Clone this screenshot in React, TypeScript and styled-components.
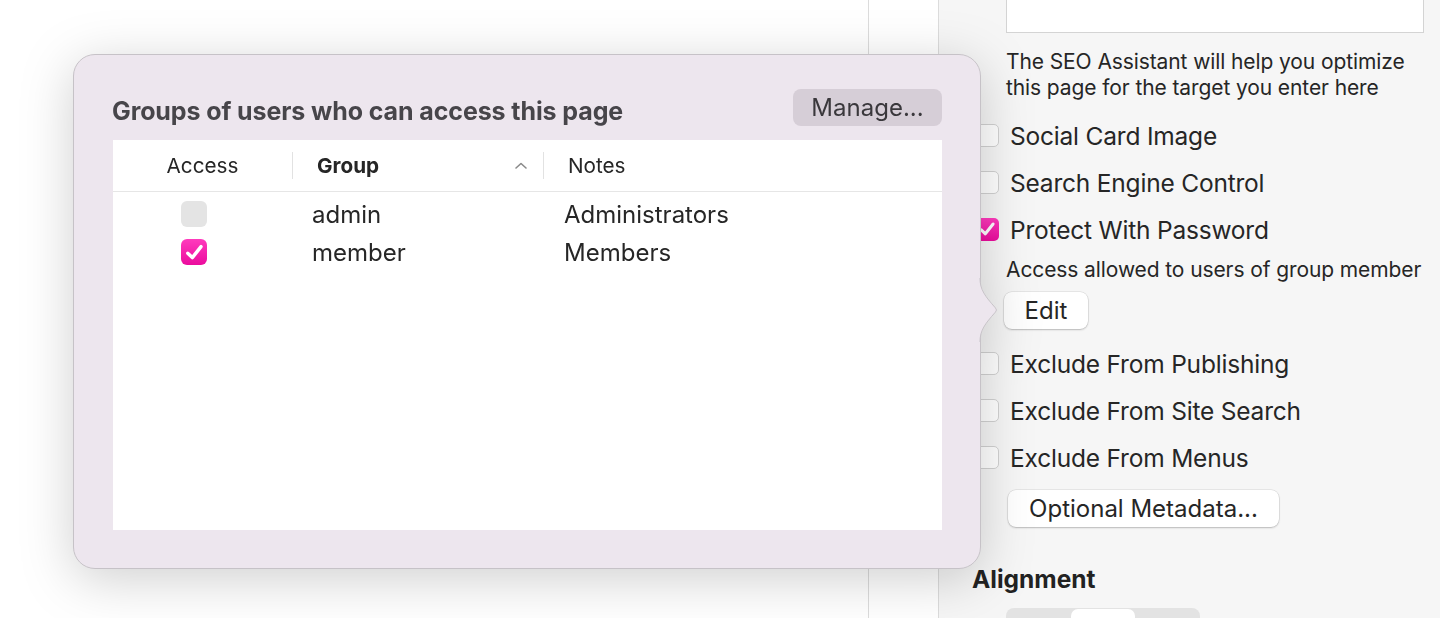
import React from "react";
import styled, { createGlobalStyle } from "styled-components";

const GlobalStyle = createGlobalStyle`
  html, body {
    margin: 0;
    padding: 0;
    background: #ffffff;
    font-family: Inter, "Noto Sans", "Liberation Sans", sans-serif;
    color: #252525;
    -webkit-font-smoothing: antialiased;
  }
`;

const Page = styled.div`
  position: relative;
  display: flex;
  width: 1440px;
  height: 618px;
  overflow: hidden;
`;

const Canvas = styled.div`
  width: 868px;
  background: #ffffff;
  border-right: 1px solid #dcdcdc;
`;

const Gutter = styled.div`
  width: 69px;
  background: #ffffff;
  border-right: 1px solid #dcdcdc;
`;

const Inspector = styled.div`
  flex: 1;
  background: #f6f6f6;
  display: flex;
  flex-direction: column;
  padding-left: 37px;
  padding-right: 16px;
  overflow: hidden;

  & > * {
    flex-shrink: 0;
  }
`;

const TargetField = styled.div`
  margin-left: 30px;
  height: 32px;
  background: #ffffff;
  border: 1px solid #d4d4d4;
  border-top: none;
`;

const HelpText = styled.p<{ $top: number }>`
  margin: ${(p) => p.$top}px 0 0 30px;
  font-size: 21px;
  line-height: 26px;
  color: #262626;
  letter-spacing: -0.1px;
  white-space: nowrap;
`;

const OptionList = styled.div<{ $top: number }>`
  display: flex;
  flex-direction: column;
  margin-top: ${(p) => p.$top}px;
`;

const OptionRow = styled.label`
  display: flex;
  align-items: center;
  gap: 11px;
  height: 47px;
  font-size: 24.5px;
  color: #262626;
  letter-spacing: -0.2px;
`;

const Box = styled.span<{ $checked?: boolean; $size: number }>`
  flex: none;
  width: ${(p) => p.$size}px;
  height: ${(p) => p.$size}px;
  border-radius: ${(p) => Math.round(p.$size / 4.5)}px;
  box-sizing: border-box;
  display: flex;
  align-items: center;
  justify-content: center;
  background: ${(p) =>
    p.$checked ? "linear-gradient(180deg, #ff3bbd 0%, #eb0c9d 100%)" : "#ffffff"};
  border: ${(p) => (p.$checked ? "none" : "1px solid #d2d2d2")};
`;

const GreyBox = styled(Box)`
  background: #e4e4e4;
  border: none;
`;

const PushButton = styled.button<{ $left: number; $width: number; $top: number }>`
  margin: ${(p) => p.$top}px 0 0 ${(p) => p.$left}px;
  width: ${(p) => p.$width}px;
  height: 37px;
  border: none;
  border-radius: 8px;
  background: #ffffff;
  box-shadow: 0 0 0 0.5px rgba(0, 0, 0, 0.12), 0 1px 2px rgba(0, 0, 0, 0.2);
  font-family: inherit;
  font-size: 24px;
  color: #262626;
  padding: 0;
`;

const SectionTitle = styled.h3`
  margin: 39px 0 0 -4px;
  font-size: 24.5px;
  font-weight: 700;
  line-height: 26px;
  color: #222;
`;

const Segmented = styled.div`
  margin: 16px 0 0 30px;
  width: 194px;
  height: 30px;
  border-radius: 8px;
  background: #e3e3e3;
  display: flex;
  padding-left: 65px;
  box-sizing: border-box;
`;

const SegmentOn = styled.div`
  width: 64px;
  height: 28px;
  margin-top: 1px;
  border-radius: 7px;
  background: #ffffff;
`;

/* popover */

const Popover = styled.div`
  position: absolute;
  left: 73px;
  top: 54px;
  width: 908px;
  height: 515px;
  filter: drop-shadow(0 10px 26px rgba(0, 0, 0, 0.19));
`;

const PopoverBody = styled.div`
  width: 100%;
  height: 100%;
  box-sizing: border-box;
  background: #ede6ee;
  border: 1px solid #c6c2c7;
  border-radius: 22px;
  padding: 34px 38px 38px 39px;
  display: flex;
  flex-direction: column;
`;

const Arrow = styled.svg`
  position: absolute;
  right: -18px;
  top: 224px;
`;

const PopoverHeader = styled.div`
  display: flex;
  align-items: center;
  justify-content: space-between;
  height: 37px;
  margin-bottom: 14px;
`;

const PopoverTitle = styled.h2`
  margin: 6px 0 0 -1px;
  font-size: 25px;
  font-weight: 700;
  color: #47454a;
  letter-spacing: -0.1px;
`;

const ManageButton = styled.button`
  width: 149px;
  height: 37px;
  border: none;
  border-radius: 8px;
  background: #d6ced7;
  font-family: inherit;
  font-size: 24px;
  color: #3a383c;
  padding: 0;
`;

const Table = styled.div`
  flex: 1;
  background: #ffffff;
  display: flex;
  flex-direction: column;
`;

const HeaderRow = styled.div`
  display: grid;
  grid-template-columns: 179px 251px 1fr;
  height: 51px;
  border-bottom: 1px solid #e6e6e6;
  margin-bottom: 3px;
`;

const HeadCell = styled.div<{ $bold?: boolean; $divider?: boolean }>`
  display: flex;
  align-items: center;
  padding: 0 15px 0 24px;
  font-size: 20.7px;
  font-weight: ${(p) => (p.$bold ? 700 : 400)};
  color: #262626;
  border-left: ${(p) => (p.$divider ? "1px solid #e2e2e2" : "none")};
  margin: ${(p) => (p.$divider ? "12px 0" : "0")};
  box-sizing: border-box;
`;

const AccessHead = styled(HeadCell)`
  padding: 0;
  justify-content: center;
`;

const SortHead = styled(HeadCell)`
  justify-content: space-between;
`;

const BodyRow = styled.div`
  display: grid;
  grid-template-columns: 179px 251px 1fr;
  height: 38px;
  align-items: center;
  font-size: 24px;
  color: #262626;
`;

const CheckCell = styled.div`
  padding-left: 68px;
  display: flex;
`;

const TextCell = styled.div<{ $pad: number }>`
  padding-left: ${(p) => p.$pad}px;
`;

const Check = ({ size }: { size: number }) => (
  <svg width={size * 0.8} height={size * 0.8} viewBox="0 0 20 20">
    <path
      d="M3.6 10.8 L8 15 L16.4 4.4"
      fill="none"
      stroke="#ffffff"
      strokeWidth="3.3"
      strokeLinecap="round"
      strokeLinejoin="round"
    />
  </svg>
);

const options1 = [
  { label: "Social Card Image", checked: false },
  { label: "Search Engine Control", checked: false },
  { label: "Protect With Password", checked: true },
];

const options2 = ["Exclude From Publishing", "Exclude From Site Search", "Exclude From Menus"];

const groups = [
  { name: "admin", notes: "Administrators", access: false },
  { name: "member", notes: "Members", access: true },
];

export default function App() {
  return (
    <>
      <GlobalStyle />
      <Page>
        <Canvas />
        <Gutter />
        <Inspector>
          <TargetField />
          <HelpText $top={16}>
            The SEO Assistant will help you optimize
            <br />
            this page for the target you enter here
          </HelpText>
          <OptionList $top={11}>
            {options1.map((o) => (
              <OptionRow key={o.label}>
                <Box $size={23} $checked={o.checked}>
                  {o.checked && <Check size={23} />}
                </Box>
                {o.label}
              </OptionRow>
            ))}
          </OptionList>
          <HelpText $top={4}>Access allowed to users of group member</HelpText>
          <PushButton $left={28} $width={84} $top={9}>
            Edit
          </PushButton>
          <OptionList $top={11}>
            {options2.map((l) => (
              <OptionRow key={l}>
                <Box $size={23} />
                {l}
              </OptionRow>
            ))}
          </OptionList>
          <PushButton $left={32} $width={271} $top={9}>
            Optional Metadata...
          </PushButton>
          <SectionTitle>Alignment</SectionTitle>
          <Segmented>
            <SegmentOn />
          </Segmented>
        </Inspector>

        <Popover>
          <PopoverBody>
            <PopoverHeader>
              <PopoverTitle>Groups of users who can access this page</PopoverTitle>
              <ManageButton>Manage...</ManageButton>
            </PopoverHeader>
            <Table>
              <HeaderRow>
                <AccessHead>Access</AccessHead>
                <SortHead $bold $divider>
                  Group
                  <svg width="14" height="9" viewBox="0 0 14 9">
                    <path
                      d="M2 7 L7 2.5 L12 7"
                      fill="none"
                      stroke="#8a8a8a"
                      strokeWidth="1.6"
                      strokeLinecap="round"
                      strokeLinejoin="round"
                    />
                  </svg>
                </SortHead>
                <HeadCell $divider>Notes</HeadCell>
              </HeaderRow>
              {groups.map((g) => (
                <BodyRow key={g.name}>
                  <CheckCell>
                    {g.access ? (
                      <Box $size={26} $checked>
                        <Check size={26} />
                      </Box>
                    ) : (
                      <GreyBox $size={26} />
                    )}
                  </CheckCell>
                  <TextCell $pad={20}>{g.name}</TextCell>
                  <TextCell $pad={21}>{g.notes}</TextCell>
                </BodyRow>
              ))}
            </Table>
          </PopoverBody>
          <Arrow width="20" height="64" viewBox="0 0 20 64">
            <path
              d="M1 0 C1 12 6 18 16.5 30 Q18.5 32 16.5 34 C6 46 1 52 1 64 Z"
              fill="#ede6ee"
            />
            <path
              d="M1 0 C1 12 6 18 16.5 30 Q18.5 32 16.5 34 C6 46 1 52 1 64"
              fill="none"
              stroke="#c6c2c7"
              strokeWidth="1"
            />
          </Arrow>
        </Popover>
      </Page>
    </>
  );
}
